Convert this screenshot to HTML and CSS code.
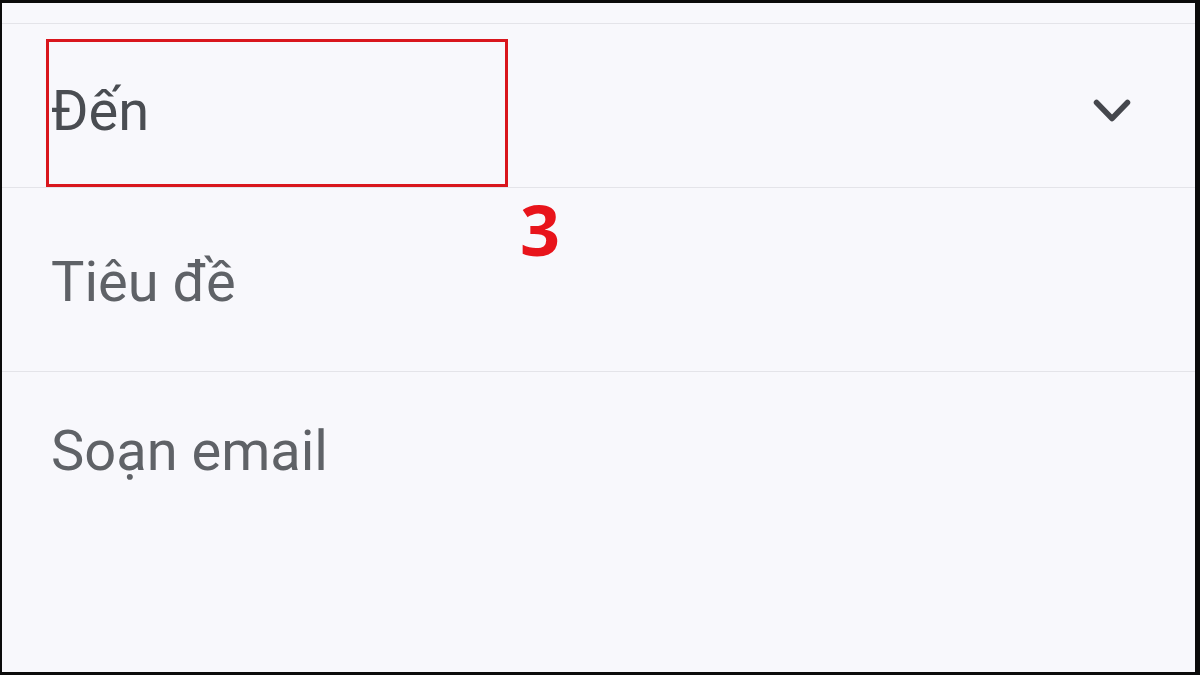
FILE: index.html
```html
<!DOCTYPE html>
<html lang="vi">
<head>
<meta charset="utf-8">
<title>Soạn email</title>
<link rel="stylesheet" href="styles.css">
</head>
<body>
<div class="frame">
  <div class="screen">
    <div class="topbar"></div>
    <div class="row row-to">
      <span class="label label-to">Đến</span>
      <svg class="chevron" viewBox="0 0 38 26" width="38" height="26" aria-hidden="true">
        <polyline points="3.5,3.5 19,19.5 34.5,3.5" fill="none" stroke="#45474d" stroke-width="5.5" stroke-linecap="round" stroke-linejoin="round"/>
      </svg>
    </div>
    <div class="row row-subject">
      <span class="label">Tiêu đề</span>
    </div>
    <div class="row row-body">
      <span class="label">Soạn email</span>
    </div>
    <div class="highlight"></div>
    <div class="step">3</div>
  </div>
</div>
</body>
</html>
```

FILE: styles.css
```css
html, body {
  margin: 0;
  padding: 0;
  background: #0b0b0b;
}

.frame {
  width: 1200px;
  height: 675px;
  box-sizing: border-box;
  border-style: solid;
  border-color: #0b0b0b;
  border-width: 3px 5px 3px 2px;
}

.screen {
  position: relative;
  height: 100%;
  background: #f8f8fc;
  display: flex;
  flex-direction: column;
  overflow: hidden;
  font-family: Roboto, "Liberation Sans", sans-serif;
}

.topbar {
  height: 20px;
  border-bottom: 1px solid #e4e4e9;
  flex: none;
}

.row {
  display: flex;
  align-items: flex-start;
  box-sizing: border-box;
  padding-left: 49px;
  flex: none;
}

.row-to {
  height: 164px;
  padding-top: 59px;
  border-bottom: 1px solid #e4e4e9;
}

.row-subject {
  height: 184px;
  padding-top: 66px;
  border-bottom: 1px solid #e4e4e9;
}

.row-body {
  flex: 1;
  padding-top: 51px;
}

.label {
  font-size: 56px;
  line-height: 1;
  color: #5f6267;
}

.label-to {
  color: #4a4d52;
}

.chevron {
  margin-left: auto;
  margin-right: 64px;
  margin-top: 16px;
}

.highlight {
  position: absolute;
  left: 44px;
  top: 36px;
  width: 462px;
  height: 148px;
  box-sizing: border-box;
  border: 3px solid #d9161d;
}

.step {
  position: absolute;
  left: 518px;
  top: 184px;
  font-family: "Open Sans", "DejaVu Sans", sans-serif;
  font-weight: 700;
  font-size: 70px;
  line-height: 1.2;
  color: #e8141b;
}
```
